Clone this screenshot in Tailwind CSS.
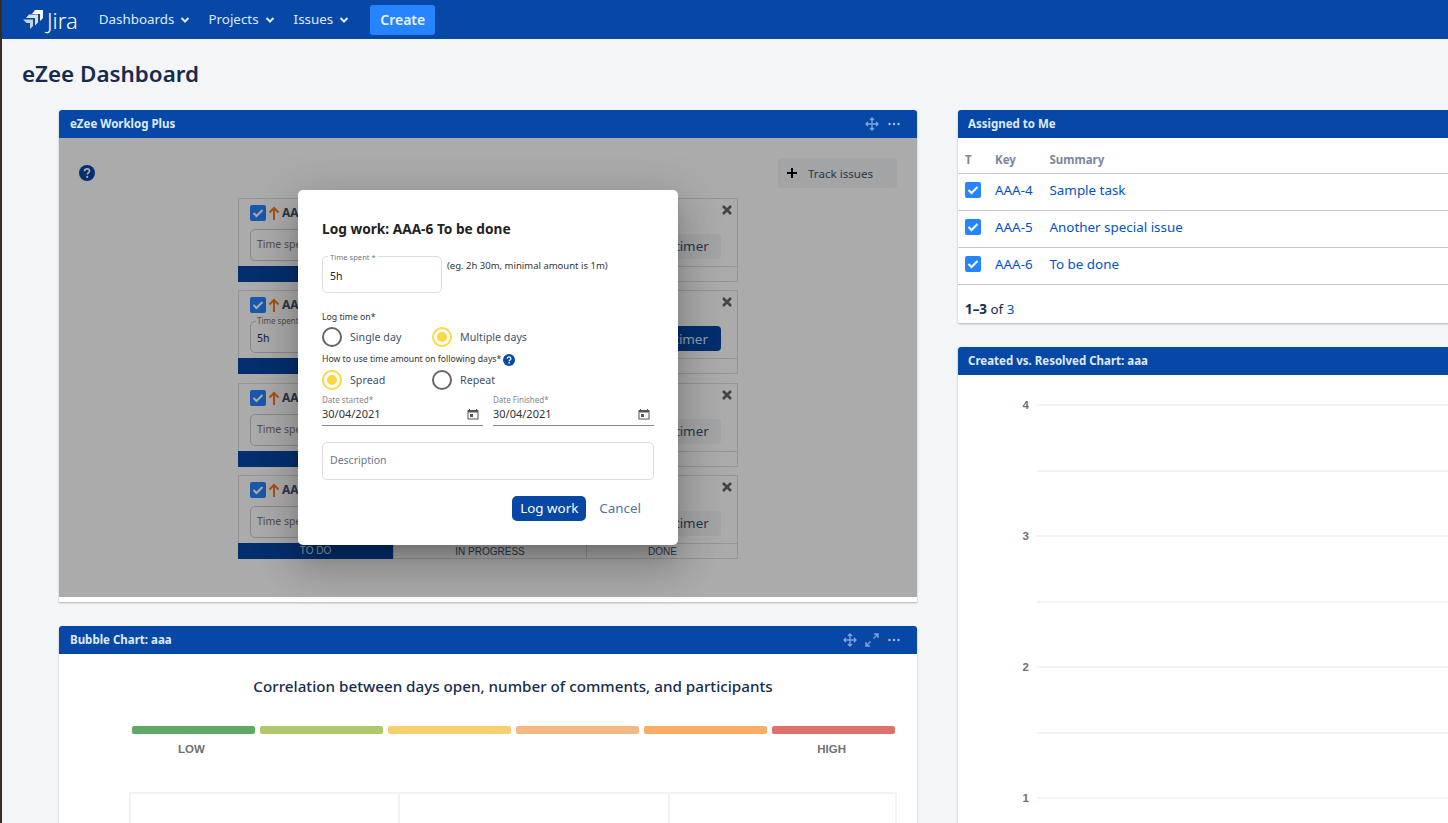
<!DOCTYPE html>
<html lang="en">
<head>
    <meta charset="UTF-8">
    <title>eZee Dashboard</title>
    <script src="https://cdn.jsdelivr.net/npm/@tailwindcss/browser@4"></script>
</head>
<body class="bg-[#f4f5f7] font-['Noto_Sans',sans-serif] text-[#172b4d]">
<div class="flex h-[823px] w-[1448px] overflow-hidden">
    <div class="w-[2px] shrink-0 bg-[#3a2c22]"></div>
    <div class="min-w-0 flex-1">

        <!-- Top nav -->
        <nav class="flex h-[39px] items-center bg-[#0747a6] pl-[21px] text-[13.4px] text-[#deebff]">
            <svg class="h-[19px] w-[20px]" viewBox="0 0 20 19" fill="#fff">
                <path d="M12 0h8v8l-3 3V4h-8z"/>
                <path d="M6 4.500h9v8l-3 3V8H3z" opacity=".85"/>
                <path d="M0 9.500h10v6.500l-3 3V13H3.500z" opacity=".75"/>
            </svg>
            <span class="ml-[4px] text-[22px] font-light leading-none text-white">Jira</span>
            <span class="ml-[21px]">Dashboards</span>
            <svg class="ml-[6px] h-[10px] w-[10px]" viewBox="0 0 10 10" fill="none" stroke="#deebff" stroke-width="2"><path d="M1.500 3l3.500 3.500L8.500 3"/></svg>
            <span class="ml-[18px]">Projects</span>
            <svg class="ml-[6px] h-[10px] w-[10px]" viewBox="0 0 10 10" fill="none" stroke="#deebff" stroke-width="2"><path d="M1.500 3l3.500 3.500L8.500 3"/></svg>
            <span class="ml-[19px]">Issues</span>
            <svg class="ml-[6px] h-[10px] w-[10px]" viewBox="0 0 10 10" fill="none" stroke="#deebff" stroke-width="2"><path d="M1.500 3l3.500 3.500L8.500 3"/></svg>
            <span class="ml-[21px] flex h-[30px] w-[65px] items-center justify-center rounded-[3px] bg-[#2684ff] text-[14px] font-semibold text-[#ebf3ff]">Create</span>
        </nav>

        <h1 class="ml-[20px] mt-[18px] h-[34px] text-[22.4px] font-semibold leading-[34px]">eZee Dashboard</h1>

        <div class="ml-[57px] mt-[19px] flex items-start gap-[41px]">
            <!-- Left column -->
            <div class="w-[858px] shrink-0">

                <!-- Worklog gadget -->
                <section class="rounded-t-[3px] bg-white pb-[5px] shadow-[0_1px_2px_rgba(9,30,66,0.3)]">
                    <header class="flex h-[28px] items-center justify-between rounded-t-[3px] bg-[#0747a6] pl-[11px] pr-[16px]">
                        <span class="text-[11.5px] font-bold text-[#deebff]">eZee Worklog Plus</span>
                        <div class="flex items-center gap-[8px]">
                            <svg class="h-[14px] w-[14px]" viewBox="0 0 14 14" fill="none" stroke="#7fa3d8" stroke-width="1.400"><path d="M7 1v12M1 7h12M5 3l2-2 2 2M5 11l2 2 2-2M3 5L1 7l2 2M11 5l2 2-2 2"/></svg>
                            <svg class="h-[14px] w-[14px]" viewBox="0 0 14 14" fill="#a9c2e6"><circle cx="2.500" cy="7" r="1.200"/><circle cx="7" cy="7" r="1.200"/><circle cx="11.500" cy="7" r="1.200"/></svg>
                        </div>
                    </header>
                    <div class="relative h-[459px] bg-white">
                        <div class="flex h-[60px] items-start justify-between pl-[20px] pr-[20px] pt-[20px]">
                            <svg class="mt-[7px] h-[16px] w-[16px]" viewBox="0 0 16 16"><circle cx="8" cy="8" r="8" fill="#0747a6"/><path d="M5.600 6.200c0-1.400 1-2.300 2.500-2.300s2.400.9 2.400 2.100c0 1.900-2.200 1.800-2.200 3.500" fill="none" stroke="#fff" stroke-width="1.700"/><circle cx="8.200" cy="11.900" r="1.100" fill="#fff"/></svg>
                            <div class="flex h-[30px] w-[119px] items-center rounded-[3px] bg-[#f4f5f7] pl-[9px] text-[11.6px] text-[#42526e]">
                                <svg class="h-[10px] w-[10px]" viewBox="0 0 10 10" fill="none" stroke="#000" stroke-width="2"><path d="M5 0v10M0 5h10"/></svg>
                                <span class="ml-[11px] pt-[1px]">Track issues</span>
                            </div>
                        </div>

                        <div class="flex flex-col items-center gap-[8.3px]">
                            <!-- card -->
                            <div class="flex h-[84px] w-[500px] flex-col border border-[#ddd]">
                                <div class="flex flex-1 items-start justify-between pl-[11px] pr-[5px] pt-[6px]">
                                    <div>
                                        <div class="flex h-[16px] items-center gap-[2px]">
                                            <svg class="h-[16px] w-[16px]" viewBox="0 0 16 16"><rect width="16" height="16" rx="2" fill="#2684ff"/><path d="M3.500 8l3 3 6-6" fill="none" stroke="#fff" stroke-width="2"/></svg>
                                            <svg class="h-[14px] w-[12px]" viewBox="0 0 12 14" fill="none" stroke="#ff7a1a" stroke-width="2"><path d="M6 14V2M1.500 6.500L6 2l4.500 4.500"/></svg>
                                            <span class="text-[12px] font-bold text-[#42526e]">AAA-4 Sample task</span>
                                        </div>
                                        <div class="mt-[8px] flex h-[32px] w-[120px] items-center rounded-[5px] border border-[#ccc] pl-[6px] text-[10.5px] text-[#777]">Time spent</div>
                                    </div>
                                    <div class="flex flex-col items-end">
                                        <svg class="h-[10px] w-[10px]" viewBox="0 0 10 10" fill="none" stroke="#666" stroke-width="2.600"><path d="M1 1l8 8M9 1l-8 8"/></svg>
                                        <span class="mr-[11px] mt-[19px] flex h-[25px] w-[92px] items-center justify-center rounded-[4px] bg-[#f4f5f7] text-[13.400px] text-[#42526e]">Start timer</span>
                                    </div>
                                </div>
                                <div class="-mx-px grid h-[15px] grid-cols-[155px_193px_152px] font-['Liberation_Sans',sans-serif] text-[10px] leading-[15px] text-[#42526e]">
                                    <span class="bg-[#0747a6] text-center text-[#deebff]">TO DO</span>
                                    <span class="border-t border-l border-[#ddd] text-center">IN PROGRESS</span>
                                    <span class="border-t border-l border-[#ddd] text-center">DONE</span>
                                </div>
                            </div>
                            <div class="flex h-[84px] w-[500px] flex-col border border-[#ddd]">
                                <div class="flex flex-1 items-start justify-between pl-[11px] pr-[5px] pt-[6px]">
                                    <div>
                                        <div class="flex h-[16px] items-center gap-[2px]">
                                            <svg class="h-[16px] w-[16px]" viewBox="0 0 16 16"><rect width="16" height="16" rx="2" fill="#2684ff"/><path d="M3.500 8l3 3 6-6" fill="none" stroke="#fff" stroke-width="2"/></svg>
                                            <svg class="h-[14px] w-[12px]" viewBox="0 0 12 14" fill="none" stroke="#ff7a1a" stroke-width="2"><path d="M6 14V2M1.500 6.500L6 2l4.500 4.500"/></svg>
                                            <span class="text-[12px] font-bold text-[#42526e]">AAA-5 Another special issue</span>
                                        </div>
                                        <div class="relative mt-[8px] flex h-[32px] w-[120px] items-end rounded-[5px] border border-[#ccc] pb-[6px] pl-[6px] text-[10.5px]">
                                            <span class="absolute left-[5px] top-[-6px] bg-white px-[1px] text-[8px] leading-[10px] text-[#777]">Time spent</span>5h
                                        </div>
                                    </div>
                                    <div class="flex flex-col items-end">
                                        <svg class="h-[10px] w-[10px]" viewBox="0 0 10 10" fill="none" stroke="#666" stroke-width="2.600"><path d="M1 1l8 8M9 1l-8 8"/></svg>
                                        <span class="mr-[11px] mt-[19px] flex h-[25px] w-[92px] items-center justify-center rounded-[4px] bg-[#0747a6] text-[13.400px] text-[#deebff]">Stop timer</span>
                                    </div>
                                </div>
                                <div class="-mx-px grid h-[15px] grid-cols-[155px_193px_152px] font-['Liberation_Sans',sans-serif] text-[10px] leading-[15px] text-[#42526e]">
                                    <span class="bg-[#0747a6] text-center text-[#deebff]">TO DO</span>
                                    <span class="border-t border-l border-[#ddd] text-center">IN PROGRESS</span>
                                    <span class="border-t border-l border-[#ddd] text-center">DONE</span>
                                </div>
                            </div>
                            <div class="flex h-[84px] w-[500px] flex-col border border-[#ddd]">
                                <div class="flex flex-1 items-start justify-between pl-[11px] pr-[5px] pt-[6px]">
                                    <div>
                                        <div class="flex h-[16px] items-center gap-[2px]">
                                            <svg class="h-[16px] w-[16px]" viewBox="0 0 16 16"><rect width="16" height="16" rx="2" fill="#2684ff"/><path d="M3.500 8l3 3 6-6" fill="none" stroke="#fff" stroke-width="2"/></svg>
                                            <svg class="h-[14px] w-[12px]" viewBox="0 0 12 14" fill="none" stroke="#ff7a1a" stroke-width="2"><path d="M6 14V2M1.500 6.500L6 2l4.500 4.500"/></svg>
                                            <span class="text-[12px] font-bold text-[#42526e]">AAA-6 To be done</span>
                                        </div>
                                        <div class="mt-[8px] flex h-[32px] w-[120px] items-center rounded-[5px] border border-[#ccc] pl-[6px] text-[10.5px] text-[#777]">Time spent</div>
                                    </div>
                                    <div class="flex flex-col items-end">
                                        <svg class="h-[10px] w-[10px]" viewBox="0 0 10 10" fill="none" stroke="#666" stroke-width="2.600"><path d="M1 1l8 8M9 1l-8 8"/></svg>
                                        <span class="mr-[11px] mt-[19px] flex h-[25px] w-[92px] items-center justify-center rounded-[4px] bg-[#f4f5f7] text-[13.400px] text-[#42526e]">Start timer</span>
                                    </div>
                                </div>
                                <div class="-mx-px grid h-[15px] grid-cols-[155px_193px_152px] font-['Liberation_Sans',sans-serif] text-[10px] leading-[15px] text-[#42526e]">
                                    <span class="bg-[#0747a6] text-center text-[#deebff]">TO DO</span>
                                    <span class="border-t border-l border-[#ddd] text-center">IN PROGRESS</span>
                                    <span class="border-t border-l border-[#ddd] text-center">DONE</span>
                                </div>
                            </div>
                            <div class="flex h-[84px] w-[500px] flex-col border border-[#ddd]">
                                <div class="flex flex-1 items-start justify-between pl-[11px] pr-[5px] pt-[6px]">
                                    <div>
                                        <div class="flex h-[16px] items-center gap-[2px]">
                                            <svg class="h-[16px] w-[16px]" viewBox="0 0 16 16"><rect width="16" height="16" rx="2" fill="#2684ff"/><path d="M3.500 8l3 3 6-6" fill="none" stroke="#fff" stroke-width="2"/></svg>
                                            <svg class="h-[14px] w-[12px]" viewBox="0 0 12 14" fill="none" stroke="#ff7a1a" stroke-width="2"><path d="M6 14V2M1.500 6.500L6 2l4.500 4.500"/></svg>
                                            <span class="text-[12px] font-bold text-[#42526e]">AAA-7 Fix</span>
                                        </div>
                                        <div class="mt-[8px] flex h-[32px] w-[120px] items-center rounded-[5px] border border-[#ccc] pl-[6px] text-[10.5px] text-[#777]">Time spent</div>
                                    </div>
                                    <div class="flex flex-col items-end">
                                        <svg class="h-[10px] w-[10px]" viewBox="0 0 10 10" fill="none" stroke="#666" stroke-width="2.600"><path d="M1 1l8 8M9 1l-8 8"/></svg>
                                        <span class="mr-[11px] mt-[19px] flex h-[25px] w-[92px] items-center justify-center rounded-[4px] bg-[#f4f5f7] text-[13.400px] text-[#42526e]">Start timer</span>
                                    </div>
                                </div>
                                <div class="-mx-px grid h-[15px] grid-cols-[155px_193px_152px] font-['Liberation_Sans',sans-serif] text-[10px] leading-[15px] text-[#42526e]">
                                    <span class="bg-[#0747a6] text-center text-[#deebff]">TO DO</span>
                                    <span class="border-t border-l border-[#ddd] text-center">IN PROGRESS</span>
                                    <span class="border-t border-l border-[#ddd] text-center">DONE</span>
                                </div>
                            </div>
                        </div>

                        <!-- Dimmer + modal -->
                        <div class="absolute inset-0 bg-black/[0.33]"></div>
                        <div class="absolute left-[239px] top-[52px] h-[355px] w-[380px] rounded-[5px] bg-white px-[24px] text-[#222] shadow-[0_11px_15px_-7px_rgba(0,0,0,0.2),0_24px_38px_3px_rgba(0,0,0,0.14),0_9px_46px_8px_rgba(0,0,0,0.12)]">
                            <h2 class="mt-[28px] text-[13.7px] font-bold leading-[22px]">Log work: AAA-6 To be done</h2>
                            <div class="mt-[16px] flex items-start">
                                <div class="relative flex h-[37px] w-[120px] items-end rounded-[5px] border border-[#ddd] pb-[9px] pl-[7px] text-[10.5px] leading-[14px]">
                                    <span class="absolute left-[5px] top-[-5px] bg-white px-[2px] text-[7.6px] leading-[10px] text-[#777]">Time spent *</span>5h
                                </div>
                                <span class="ml-[5px] mt-[3px] text-[9.5px] leading-[14px] text-[#333]">(eg. 2h 30m, minimal amount is 1m)</span>
                            </div>
                            <p class="mt-[17px] text-[8.7px] leading-[14px] text-[#333]">Log time on*</p>
                            <div class="mt-[3px] flex h-[20px] items-center text-[10.7px] text-[#42526e]">
                                <span class="h-[20px] w-[20px] rounded-full border-2 border-[#666]"></span>
                                <span class="ml-[8px] w-[82px]">Single day</span>
                                <span class="flex h-[20px] w-[20px] items-center justify-center rounded-full border-2 border-[#ffd740]"><span class="h-[10px] w-[10px] rounded-full bg-[#ffd740]"></span></span>
                                <span class="ml-[8px]">Multiple days</span>
                            </div>
                            <div class="mt-[6px] flex h-[14px] items-center gap-[2px] text-[8.7px] text-[#333]">
                                How to use time amount on following days*
                                <svg class="h-[12px] w-[12px]" viewBox="0 0 16 16"><circle cx="8" cy="8" r="8" fill="#0747a6"/><path d="M5.600 6.200c0-1.400 1-2.300 2.500-2.300s2.400.9 2.400 2.100c0 1.900-2.200 1.800-2.200 3.500" fill="none" stroke="#fff" stroke-width="1.700"/><circle cx="8.200" cy="11.900" r="1.100" fill="#fff"/></svg>
                            </div>
                            <div class="mt-[3px] flex h-[20px] items-center text-[10.7px] text-[#42526e]">
                                <span class="flex h-[20px] w-[20px] items-center justify-center rounded-full border-2 border-[#ffd740]"><span class="h-[10px] w-[10px] rounded-full bg-[#ffd740]"></span></span>
                                <span class="ml-[8px] w-[82px]">Spread</span>
                                <span class="h-[20px] w-[20px] rounded-full border-2 border-[#666]"></span>
                                <span class="ml-[8px]">Repeat</span>
                            </div>
                            <div class="mt-[4px] flex gap-[10px]">
                                <div class="h-[32px] w-[161px] border-b border-[#888]">
                                    <p class="text-[8px] leading-[12px] text-[#888]">Date started*</p>
                                    <div class="flex items-center justify-between pr-[4px] text-[11px] leading-[15px] text-[#333]">30/04/2021
                                        <svg class="h-[12px] w-[12px]" viewBox="0 0 12 12" fill="#555"><path d="M2 1h1v1h6V1h1v1h1a.5.5 0 0 1 .5.5V11a.5.5 0 0 1-.5.5H1a.5.5 0 0 1-.5-.5V2.500A.5.5 0 0 1 1 2h1zM1.500 4.500V10.500h9V4.500zM3 6h3v3H3z"/></svg>
                                    </div>
                                </div>
                                <div class="h-[32px] w-[161px] border-b border-[#888]">
                                    <p class="text-[8px] leading-[12px] text-[#888]">Date Finished*</p>
                                    <div class="flex items-center justify-between pr-[4px] text-[11px] leading-[15px] text-[#333]">30/04/2021
                                        <svg class="h-[12px] w-[12px]" viewBox="0 0 12 12" fill="#555"><path d="M2 1h1v1h6V1h1v1h1a.5.5 0 0 1 .5.5V11a.5.5 0 0 1-.5.5H1a.5.5 0 0 1-.5-.5V2.500A.5.5 0 0 1 1 2h1zM1.500 4.500V10.500h9V4.500zM3 6h3v3H3z"/></svg>
                                    </div>
                                </div>
                            </div>
                            <div class="mt-[16px] flex h-[38px] w-[332px] items-center rounded-[5px] border border-[#ddd] pl-[7px] text-[10.5px] text-[#6b778c]">Description</div>
                            <div class="mt-[16px] flex h-[25px] items-center justify-end pr-[13px] text-[13.4px]">
                                <span class="flex h-[25px] w-[74px] items-center justify-center rounded-[5px] bg-[#0747a6] text-white">Log work</span>
                                <span class="ml-[13px] text-[#4a77a8]">Cancel</span>
                            </div>
                        </div>
                    </div>
                </section>

                <!-- Bubble chart gadget -->
                <section class="mt-[24px] h-[300px] rounded-t-[3px] bg-white shadow-[0_1px_2px_rgba(9,30,66,0.3)]">
                    <header class="flex h-[28px] items-center justify-between rounded-t-[3px] bg-[#0747a6] pl-[11px] pr-[16px]">
                        <span class="text-[11.5px] font-bold text-[#deebff]">Bubble Chart: aaa</span>
                        <div class="flex items-center gap-[8px]">
                            <svg class="h-[14px] w-[14px]" viewBox="0 0 14 14" fill="none" stroke="#7fa3d8" stroke-width="1.400"><path d="M7 1v12M1 7h12M5 3l2-2 2 2M5 11l2 2 2-2M3 5L1 7l2 2M11 5l2 2-2 2"/></svg>
                            <svg class="h-[14px] w-[14px]" viewBox="0 0 14 14" fill="none" stroke="#7fa3d8" stroke-width="1.400"><path d="M8.500 5.500L13 1M9 1h4v4M5.500 8.500L1 13M5 13H1V9"/></svg>
                            <svg class="h-[14px] w-[14px]" viewBox="0 0 14 14" fill="#a9c2e6"><circle cx="2.500" cy="7" r="1.200"/><circle cx="7" cy="7" r="1.200"/><circle cx="11.500" cy="7" r="1.200"/></svg>
                        </div>
                    </header>
                    <h3 class="mt-[20px] pl-[50px] text-center text-[15.2px] font-medium leading-[24px]">Correlation between days open, number of comments, and participants</h3>
                    <div class="ml-[73px] mt-[28px] flex w-[763px] gap-[5px]">
                        <span class="h-[8px] flex-1 rounded-[2px] bg-[#60a865]"></span>
                        <span class="h-[8px] flex-1 rounded-[2px] bg-[#b0c86c]"></span>
                        <span class="h-[8px] flex-1 rounded-[2px] bg-[#f6d06f]"></span>
                        <span class="h-[8px] flex-1 rounded-[2px] bg-[#f4b882]"></span>
                        <span class="h-[8px] flex-1 rounded-[2px] bg-[#fbad66]"></span>
                        <span class="h-[8px] flex-1 rounded-[2px] bg-[#dd726b]"></span>
                    </div>
                    <div class="ml-[119px] mt-[8px] flex w-[668px] justify-between font-['Liberation_Sans',sans-serif] text-[11.5px] font-bold leading-[14px] text-[#707070]">
                        <span>LOW</span><span>HIGH</span>
                    </div>
                    <div class="ml-[70px] mt-[36px] grid h-[60px] w-[768px] grid-cols-[269px_270px_1fr] border-2 border-b-0 border-[#f2f2f2]">
                        <div class="border-r-2 border-[#f2f2f2]"></div>
                        <div class="border-r-2 border-[#f2f2f2]"></div>
                        <div></div>
                    </div>
                </section>
            </div>

            <!-- Right column -->
            <div class="w-[520px] shrink-0">
                <section class="rounded-t-[3px] bg-white shadow-[0_1px_2px_rgba(9,30,66,0.3)]">
                    <header class="flex h-[28px] items-center rounded-t-[3px] bg-[#0747a6] pl-[10px]">
                        <span class="text-[11.5px] font-bold text-[#deebff]">Assigned to Me</span>
                    </header>
                    <div class="flex h-[36px] items-end border-b border-[#c1c7d0] pb-[5px] text-[11.5px] font-bold leading-[16px] text-[#7a869a]">
                        <span class="w-[37px] pl-[7px]">T</span><span class="w-[54.5px]">Key</span><span>Summary</span>
                    </div>
                    <div class="flex h-[37px] items-center border-b border-[#c1c7d0] pb-[4px] text-[13.4px] text-[#0052cc]">
                        <span class="flex w-[37px] pl-[7px]"><svg class="h-[16px] w-[16px]" viewBox="0 0 16 16"><rect width="16" height="16" rx="2" fill="#2684ff"/><path d="M3.500 8l3 3 6-6" fill="none" stroke="#fff" stroke-width="2"/></svg></span>
                        <span class="w-[54.5px]">AAA-4</span><span>Sample task</span>
                    </div>
                    <div class="flex h-[37px] items-center border-b border-[#c1c7d0] pb-[4px] text-[13.4px] text-[#0052cc]">
                        <span class="flex w-[37px] pl-[7px]"><svg class="h-[16px] w-[16px]" viewBox="0 0 16 16"><rect width="16" height="16" rx="2" fill="#2684ff"/><path d="M3.500 8l3 3 6-6" fill="none" stroke="#fff" stroke-width="2"/></svg></span>
                        <span class="w-[54.5px]">AAA-5</span><span>Another special issue</span>
                    </div>
                    <div class="flex h-[37px] items-center border-b border-[#c1c7d0] pb-[4px] text-[13.4px] text-[#0052cc]">
                        <span class="flex w-[37px] pl-[7px]"><svg class="h-[16px] w-[16px]" viewBox="0 0 16 16"><rect width="16" height="16" rx="2" fill="#2684ff"/><path d="M3.500 8l3 3 6-6" fill="none" stroke="#fff" stroke-width="2"/></svg></span>
                        <span class="w-[54.5px]">AAA-6</span><span>To be done</span>
                    </div>
                    <div class="flex h-[38px] items-center pl-[7px] pt-[10px] text-[13.4px]"><b>1–3</b>&nbsp;of&nbsp;<span class="text-[#0052cc]">3</span></div>
                </section>

                <section class="mt-[24px] bg-white shadow-[0_1px_2px_rgba(9,30,66,0.3)]">
                    <header class="flex h-[28px] items-center rounded-t-[3px] bg-[#0747a6] pl-[10px]">
                        <span class="text-[11.5px] font-bold text-[#deebff]">Created vs. Resolved Chart: aaa</span>
                    </header>
                    <div class="pt-[29px] font-['Liberation_Sans',sans-serif] text-[11.5px] font-bold text-[#707070]">
                        <div class="flex h-[65.5px]"><span class="w-[71px] -translate-y-[7px] text-right">4</span><span class="ml-[8px] flex-1 border-t-2 border-[#f2f2f2]"></span></div>
                        <div class="flex h-[65.5px]"><span class="w-[71px]"></span><span class="ml-[8px] flex-1 border-t-2 border-[#f2f2f2]"></span></div>
                        <div class="flex h-[65.5px]"><span class="w-[71px] -translate-y-[7px] text-right">3</span><span class="ml-[8px] flex-1 border-t-2 border-[#f2f2f2]"></span></div>
                        <div class="flex h-[65.5px]"><span class="w-[71px]"></span><span class="ml-[8px] flex-1 border-t-2 border-[#f2f2f2]"></span></div>
                        <div class="flex h-[65.5px]"><span class="w-[71px] -translate-y-[7px] text-right">2</span><span class="ml-[8px] flex-1 border-t-2 border-[#f2f2f2]"></span></div>
                        <div class="flex h-[65.5px]"><span class="w-[71px]"></span><span class="ml-[8px] flex-1 border-t-2 border-[#f2f2f2]"></span></div>
                        <div class="flex h-[65.5px]"><span class="w-[71px] -translate-y-[7px] text-right">1</span><span class="ml-[8px] flex-1 border-t-2 border-[#f2f2f2]"></span></div>
                    </div>
                </section>
            </div>
        </div>
    </div>
</div>
</body>
</html>
